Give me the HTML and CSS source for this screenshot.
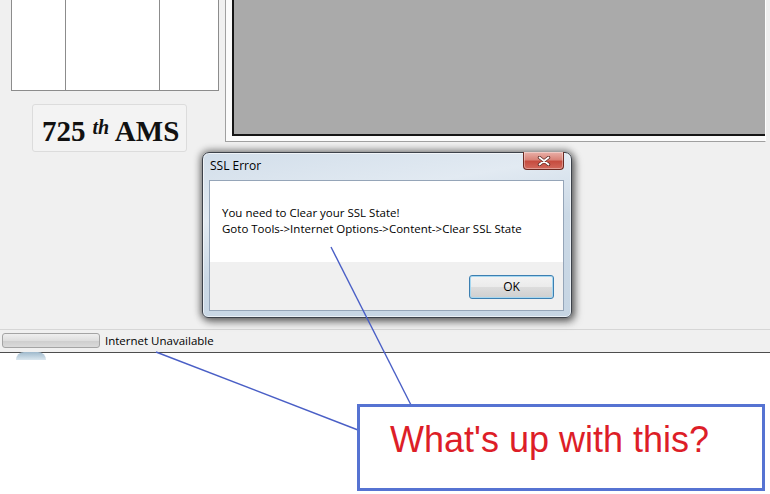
FILE: index.html
```html
<!DOCTYPE html>
<html>
<head>
<meta charset="utf-8">
<title>SSL Error</title>
<link rel="stylesheet" href="styles.css">
</head>
<body>
<div class="screen">
  <div class="app">
    <div class="left">
      <div class="grid">
        <div class="cell"></div>
        <div class="cell"></div>
        <div class="cell"></div>
      </div>
      <div class="logo">725<span class="th">th</span> AMS</div>
    </div>
    <div class="frame"><div class="viewer"></div></div>
  </div>
  <div class="status">
    <div class="progress"></div>
    <span class="status-text">Internet Unavailable</span>
  </div>
  <div class="orb"></div>

  <div class="dialog">
    <div class="titlebar">
      <span class="title">SSL Error</span>
      <div class="close">
        <svg width="14" height="10" viewBox="0 0 14 10">
          <path d="M2.5 1.5 L11.5 8.5 M11.5 1.5 L2.5 8.5" stroke="#5a2a24" stroke-width="3.4" stroke-linecap="round"/>
          <path d="M2.5 1.5 L11.5 8.5 M11.5 1.5 L2.5 8.5" stroke="#ffffff" stroke-width="1.8" stroke-linecap="round"/>
        </svg>
      </div>
    </div>
    <div class="client">
      <div class="message">
        <p>You need to Clear your SSL State!</p>
        <p>Goto Tools-&gt;Internet Options-&gt;Content-&gt;Clear SSL State</p>
      </div>
      <div class="buttons"><div class="ok">OK</div></div>
    </div>
  </div>

  <svg class="arrows" width="770" height="494" viewBox="0 0 770 494">
    <line x1="331" y1="247" x2="411" y2="405" />
    <line x1="156" y1="352" x2="358" y2="430" />
  </svg>

  <div class="callout">What's up with this?</div>
</div>
</body>
</html>
```

FILE: styles.css
```css
* { box-sizing: border-box; margin: 0; padding: 0; }
html, body { width: 770px; height: 494px; overflow: hidden; background: #fff; }
body { font-family: "Open Sans", "Noto Sans", sans-serif; font-size: 11.5px; color: #000; }

.screen { position: relative; width: 770px; height: 494px; background: #fff; }

.app { display: flex; height: 329px; background: #f0f0f0; }

.left { width: 225px; flex: none; display: flex; flex-direction: column; align-items: flex-start; }

.grid {
  margin-left: 11px; width: 208px; height: 91px;
  display: grid; grid-template-columns: 54px 94px 1fr;
  border-left: 1px solid #8c8c8c; border-right: 1px solid #8c8c8c; border-bottom: 1px solid #8c8c8c;
  background: #fff;
}
.cell { border-right: 1px solid #8c8c8c; }
.cell:last-child { border-right: 0; }

.logo {
  margin: 13px 0 0 32px; width: 155px; height: 48px;
  border: 1px solid #dcdcdc; border-radius: 3px; background: #f3f3f3;
  font-family: "Liberation Serif", "Times New Roman", serif; font-weight: bold; font-size: 29px;
  line-height: 44px; padding-left: 9px; color: #111; white-space: nowrap;
}
.th { font-style: italic; font-size: 20px; vertical-align: 7px; margin-left: 7px; }

.frame {
  width: 541px; height: 142px; flex: none;
  background: #fbfbfb;
  border-left: 1px solid #a0a0a0; border-bottom: 1px solid #a0a0a0; border-right: 1px solid #fff;
  padding: 0 0 5px 6px;
  display: flex;
}
.viewer {
  flex: 1; background: #aaaaaa;
  border-left: 2px solid #151515; border-bottom: 2px solid #151515;
}

.status {
  height: 24px; background: #f0f0f0;
  border-top: 1px solid #d6d6d6; border-bottom: 1px solid #4d4d4d;
  display: flex; align-items: flex-start; gap: 5px;
  padding: 3px 0 0 2px;
}
.progress {
  width: 98px; height: 15px;
  border: 1px solid #a4a4a4; border-radius: 3px;
  background: linear-gradient(#efefef, #dedede 50%, #cdcdcd 51%, #dadada);
}
.status-text { line-height: 15px; }

.orb {
  position: absolute; left: 16px; top: 352px; width: 30px; height: 8px;
  border-radius: 15px 15px 0 0;
  background: linear-gradient(#9fb9cc, #dbe7ef);
}

.dialog {
  position: absolute; left: 202px; top: 152px; width: 370px; height: 166px;
  border: 1px solid #3d424a; border-radius: 7px 7px 6px 6px;
  padding: 0 7px 6px 6px;
  display: flex; flex-direction: column;
  background: linear-gradient(170deg, #d2deea 0%, #e2eaf2 30%, #cbd9e6 55%, #c6d5e3 100%);
  box-shadow: inset 0 0 0 1px rgba(255,255,255,0.6), 0 0 7px 2px rgba(0,0,0,0.45), 3px 4px 8px rgba(0,0,0,0.35);
}
.titlebar { position: relative; height: 27px; flex: none; padding-left: 1px; }
.title { line-height: 26px; font-size: 12px; }
.close {
  position: absolute; top: -1px; right: 0; width: 41px; height: 18px;
  border: 1px solid #6d2a22; border-top: 0; border-radius: 0 0 4px 4px;
  background: linear-gradient(#e9b0a8, #d98479 45%, #c64c3f 55%, #d2695c);
  display: flex; align-items: center; justify-content: center;
  box-shadow: inset 0 0 0 1px rgba(255,255,255,0.35);
}
.client {
  flex: 1; display: flex; flex-direction: column;
  border: 1px solid #95a5b8; background: #fff;
}
.message { height: 81px; flex: none; padding: 24px 12px 0; line-height: 16px; }
.buttons {
  flex: 1; background: #f0f0f0;
  display: flex; justify-content: flex-end; align-items: flex-start;
  padding: 13px 9px 0 0;
}
.ok {
  width: 85px; height: 24px;
  border: 1px solid #3c7fb1; border-radius: 3px;
  background: linear-gradient(#f3f3f3, #ebebeb 48%, #dcdcdc 52%, #cfcfcf);
  box-shadow: inset 0 0 0 1px #a6d7f0;
  text-align: center; line-height: 22px; font-size: 12px;
}

.arrows { position: absolute; left: 0; top: 0; pointer-events: none; }
.arrows line { stroke: #4a5fc6; stroke-width: 1.4; }

.callout {
  position: absolute; left: 357px; top: 404px; width: 408px; height: 87px;
  border: 3px solid #5673d2; background: #fff;
  font-family: "Liberation Sans", Arial, sans-serif; font-size: 36px; line-height: 36px;
  color: #dd1e28; padding: 15px 0 0 30px; white-space: nowrap;
}
```
